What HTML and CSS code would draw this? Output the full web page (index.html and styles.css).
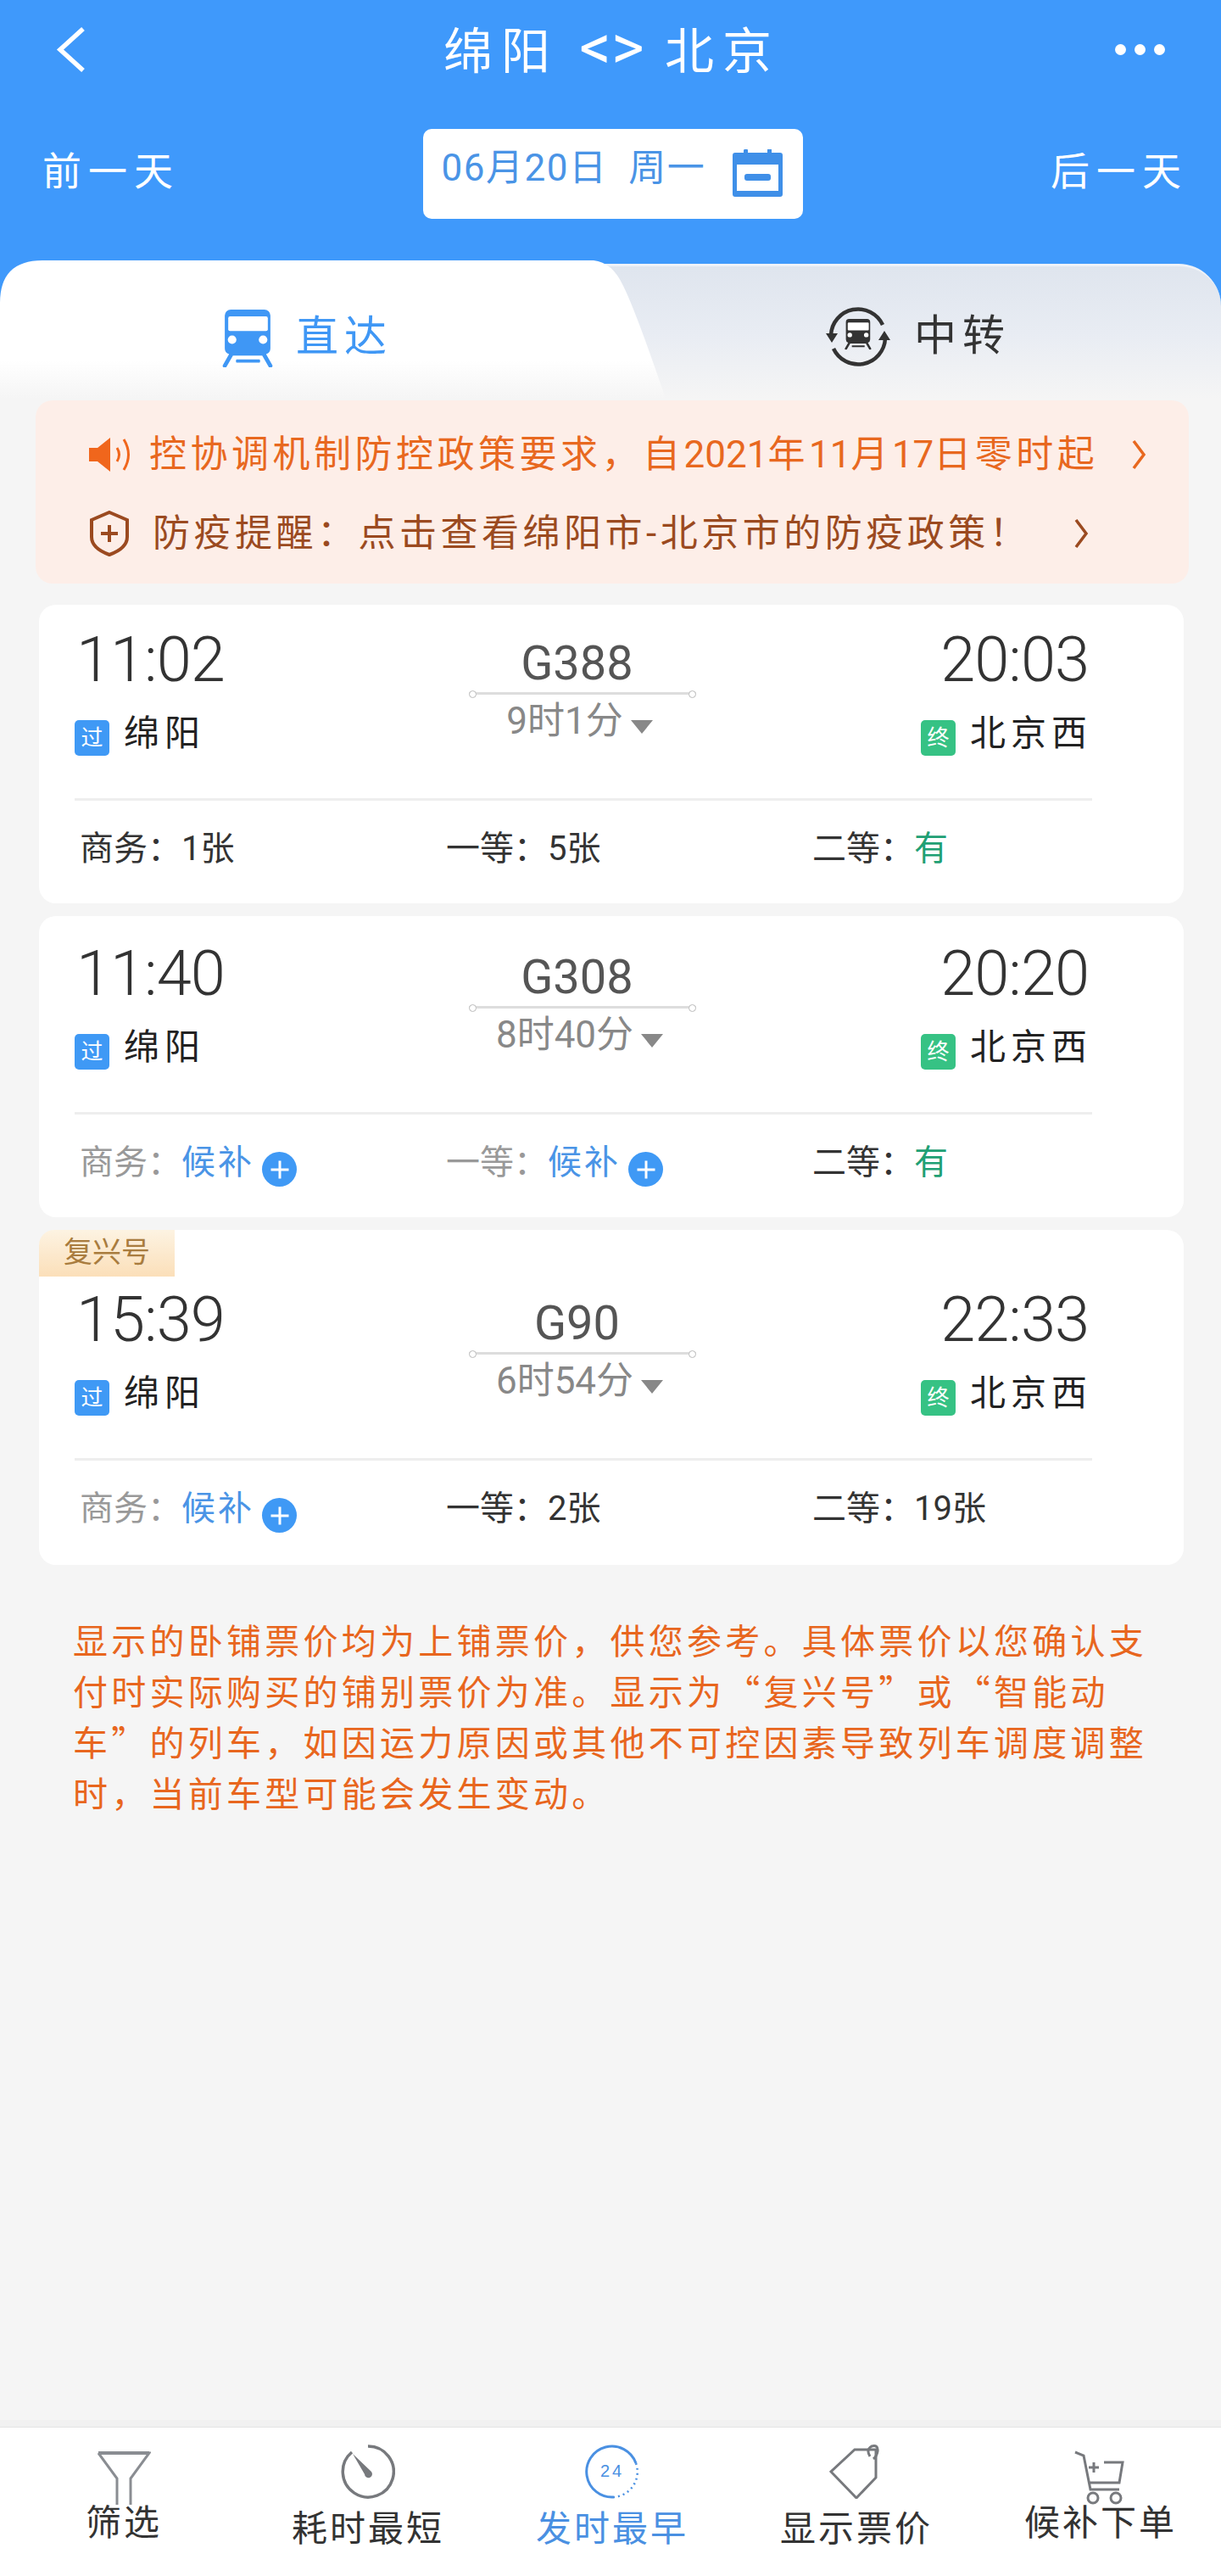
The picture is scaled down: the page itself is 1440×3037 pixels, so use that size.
FILE: index.html
```html
<!DOCTYPE html>
<html lang="zh-CN">
<head>
<meta charset="utf-8">
<title>绵阳 &lt;&gt; 北京</title>
<link rel="stylesheet" href="styles.css">
</head>
<body>
<svg class="defs" width="0" height="0" aria-hidden="true">
  <symbol id="train" viewBox="0 0 59 67">
    <path fill="currentColor" d="M10 0h39a7 7 0 0 1 7 7v38a7 7 0 0 1-5 6.700l7 12.300a2 2 0 0 1-4 2.500l-7.500-13h-34l-7.500 13a2 2 0 0 1-4-2.500l7-12.300a7 7 0 0 1-5-6.700V7a7 7 0 0 1 7-7z"/>
    <rect class="train-window" x="7" y="8" width="46" height="17" rx="2"/>
    <circle class="train-window" cx="11.500" cy="35" r="5"/>
    <circle class="train-window" cx="47.500" cy="35" r="5"/>
    <rect x="16" y="58" width="28" height="3.500" rx="1" fill="currentColor"/>
  </symbol>
  <symbol id="chev" viewBox="0 0 18 36">
    <path d="M3 2l12 16L3 34" fill="none" stroke="currentColor" stroke-width="3.500"/>
  </symbol>
</svg>
<div class="page">
  <header class="top">
    <div class="nav">
      <svg class="back" viewBox="0 0 37 55"><path d="M33 3L6 27.500 33 52" fill="none" stroke="#fff" stroke-width="5.500"/></svg>
      <h1 class="title">绵阳 <span class="title-sym">&lt;&gt;</span> 北京</h1>
      <div class="more"><i></i><i></i><i></i></div>
    </div>
    <div class="dates">
      <span class="day-link">前一天</span>
      <div class="date-box">
        <span class="date-text">06月20日&nbsp;&nbsp;周一</span>
        <svg class="cal" viewBox="0 0 59 56">
          <path fill="#3f8fe8" d="M3 4h10V1a2 2 0 0 1 2-1 2 2 0 0 1 3 1v3h23V1a2.500 2.500 0 0 1 5 0v3h10a3 3 0 0 1 3 3v46a3 3 0 0 1-3 3H3a3 3 0 0 1-3-3V7a3 3 0 0 1 3-3z"/>
          <rect x="5" y="18" width="49" height="31" fill="#fff"/>
          <rect x="14" y="29" width="31" height="8" rx="3" fill="#3f8fe8"/>
        </svg>
      </div>
      <span class="day-link day-next">后一天</span>
    </div>
  </header>

  <section class="tabs">
    <div class="tab tab-direct">
      <svg class="tab-train"><use href="#train"/></svg>
      <span class="tab-label">直达</span>
    </div>
    <div class="tab tab-transfer">
      <svg class="tab-swap" viewBox="0 0 76 72">
        <g fill="none" stroke="#333" stroke-width="4.500">
          <path d="M6 34A32 32 0 0 1 67 22"/>
          <path d="M70 38A32 32 0 0 1 9 50"/>
        </g>
        <path fill="#333" d="M0 32h14l-7 11zM62 40h14l-7-11z"/>
        <g transform="translate(22 15) scale(.54)" color="#333"><use href="#train" width="59" height="67"/></g>
      </svg>
      <span class="tab-label">中转</span>
    </div>
  </section>

  <main class="content">
    <section class="notice">
      <div class="notice-row notice-alert">
        <svg class="speaker" viewBox="0 0 50 42">
          <path fill="#f0661c" d="M0 13h10L25 1v40L10 29H0z"/>
          <path d="M33 13q5 8 0 16M41 3q11 18 0 36" fill="none" stroke="#f0661c" stroke-width="3"/>
        </svg>
        <span class="notice-text">控协调机制防控政策要求，自<span class="num">2021</span>年<span class="num">11</span>月<span class="num">17</span>日零时起</span>
        <svg class="chev"><use href="#chev"/></svg>
      </div>
      <div class="notice-row notice-health">
        <svg class="shield" viewBox="0 0 48 54">
          <path d="M24 2l21 9v20c0 10-10 17-21 21C13 48 3 41 3 31V11z" fill="none" stroke="#9b4a20" stroke-width="4"/>
          <path d="M24 17v20M14 27h20" stroke="#9b4a20" stroke-width="4"/>
        </svg>
        <span class="notice-text">防疫提醒：点击查看绵阳市-北京市的防疫政策！</span>
        <svg class="chev"><use href="#chev"/></svg>
      </div>
    </section>

    <section class="tickets">
      <article class="ticket">
        <div class="route">
          <div class="end">
            <div class="time">11:02</div>
            <div class="station"><span class="tag tag-pass">过</span>绵阳</div>
          </div>
          <div class="mid">
            <div class="train-no">G388</div>
            <div class="track"></div>
            <div class="duration">9时1分<span class="caret"></span></div>
          </div>
          <div class="end end-right">
            <div class="time">20:03</div>
            <div class="station"><span class="tag tag-end">终</span>北京西</div>
          </div>
        </div>
        <div class="seats">
          <div class="seat">商务：1张</div>
          <div class="seat">一等：5张</div>
          <div class="seat">二等：<span class="have">有</span></div>
        </div>
      </article>

      <article class="ticket ticket-wait">
        <div class="route">
          <div class="end">
            <div class="time">11:40</div>
            <div class="station"><span class="tag tag-pass">过</span>绵阳</div>
          </div>
          <div class="mid">
            <div class="train-no">G308</div>
            <div class="track"></div>
            <div class="duration">8时40分<span class="caret"></span></div>
          </div>
          <div class="end end-right">
            <div class="time">20:20</div>
            <div class="station"><span class="tag tag-end">终</span>北京西</div>
          </div>
        </div>
        <div class="seats">
          <div class="seat seat-off">商务：<span class="wait">候补</span><span class="plus"></span></div>
          <div class="seat seat-off">一等：<span class="wait">候补</span><span class="plus"></span></div>
          <div class="seat">二等：<span class="have">有</span></div>
        </div>
      </article>

      <article class="ticket ticket-fx">
        <span class="fx-badge">复兴号</span>
        <div class="route">
          <div class="end">
            <div class="time">15:39</div>
            <div class="station"><span class="tag tag-pass">过</span>绵阳</div>
          </div>
          <div class="mid">
            <div class="train-no">G90</div>
            <div class="track"></div>
            <div class="duration">6时54分<span class="caret"></span></div>
          </div>
          <div class="end end-right">
            <div class="time">22:33</div>
            <div class="station"><span class="tag tag-end">终</span>北京西</div>
          </div>
        </div>
        <div class="seats">
          <div class="seat seat-off">商务：<span class="wait">候补</span><span class="plus"></span></div>
          <div class="seat">一等：2张</div>
          <div class="seat">二等：19张</div>
        </div>
      </article>
    </section>

    <p class="note">显示的卧铺票价均为上铺票价，供您参考。具体票价以您确认支<br>付时实际购买的铺别票价为准。显示为“复兴号”或“智能动<br>车”的列车，如因运力原因或其他不可控因素导致列车调度调整<br>时，当前车型可能会发生变动。</p>
  </main>

  <nav class="bar">
    <div class="bar-item bar-high">
      <svg class="bar-icon" viewBox="0 0 64 64">
        <path d="M2 3h60L40 33v31M2 3l22 30v31" fill="none" stroke="#8a8d92" stroke-width="3"/>
        <path d="M2 3h60" stroke="#8a8d92" stroke-width="4"/>
      </svg>
      <span>筛选</span>
    </div>
    <div class="bar-item">
      <svg class="bar-icon" viewBox="0 0 64 64">
        <path d="M32 2a30 30 0 1 1-19 7" fill="none" stroke="#77797d" stroke-width="3.500"/>
        <path d="M14 11l22 21a4.500 4.500 0 1 1-8 3z" fill="#77797d"/>
      </svg>
      <span>耗时最短</span>
    </div>
    <div class="bar-item bar-active">
      <svg class="bar-icon" viewBox="0 0 64 64">
        <path d="M60 22A30 30 0 1 0 34 62" fill="none" stroke="#4a90e2" stroke-width="3"/>
        <path d="M60 22A30 30 0 0 1 34 62" fill="none" stroke="#4a90e2" stroke-width="2.500" stroke-dasharray="2 4"/>
        <text class="icon-24" x="32" y="38" text-anchor="middle">24</text>
      </svg>
      <span>发时最早</span>
    </div>
    <div class="bar-item">
      <svg class="bar-icon" viewBox="0 0 64 64">
        <path d="M30 6h25v33L32 63 2 32z" fill="none" stroke="#77797d" stroke-width="3"/>
        <path d="M48 14q-5-8 2-12 8-2 7 6-1 6-5 9" fill="none" stroke="#77797d" stroke-width="3"/>
      </svg>
      <span>显示票价</span>
    </div>
    <div class="bar-item bar-high">
      <svg class="bar-icon" viewBox="0 0 64 64">
        <path d="M2 2l10 4 8 40h34M24 14v12M18 20h12M36 14h22l-4 24H18" fill="none" stroke="#77797d" stroke-width="3"/>
        <circle cx="23" cy="56" r="6" fill="none" stroke="#77797d" stroke-width="3"/>
        <circle cx="50" cy="56" r="6" fill="none" stroke="#77797d" stroke-width="3"/>
      </svg>
      <span>候补下单</span>
    </div>
  </nav>
</div>
</body>
</html>
```

FILE: styles.css
```css
* { box-sizing: border-box; }
html, body { margin: 0; padding: 0; }
body {
  font-family: Roboto, "Noto Sans CJK SC", sans-serif;
  background: #f5f5f5;
  color: #333;
}
.defs { position: absolute; }
.train-window { fill: #fff; }

.page {
  width: 1440px;
  height: 3037px;
  display: flex;
  flex-direction: column;
  overflow: hidden;
}

/* header */
.top {
  background: #3f99fb;
  padding: 0 45px 49px 50px;
  color: #fff;
}
.nav {
  height: 116px;
  padding-left: 15px;
  padding-right: 21px;
  display: grid;
  grid-template-columns: 1fr auto 1fr;
  align-items: center;
}
.back { width: 37px; height: 55px; }
.title {
  margin: 0 0 0 4px;
  font-size: 58px;
  font-weight: 400;
  letter-spacing: 10px;
  line-height: 1;
  white-space: pre;
}
.title-sym { font-size: 74px; letter-spacing: 0; line-height: 58px; }
.more { justify-self: end; display: flex; gap: 10px; }
.more i { width: 13px; height: 13px; border-radius: 50%; background: #fff; }
.dates {
  margin-top: 36px;
  display: grid;
  grid-template-columns: 1fr 448px 1fr;
  align-items: center;
}
.day-link { font-size: 46px; letter-spacing: 8px; line-height: 1; margin-top: -6px; }
.day-next { justify-self: end; margin-right: -6px; }
.date-box {
  height: 106px;
  background: #fff;
  border-radius: 10px;
  padding: 0 24px 14px 22px;
  display: flex;
  align-items: center;
  justify-content: space-between;
}
.date-text {
  font-size: 44px;
  letter-spacing: 1.500px;
  color: #4a94e6;
  line-height: 1;
  white-space: nowrap;
}
.cal { width: 59px; height: 56px; margin-top: 12px; }

/* tabs */
.tabs {
  background: #3f99fb;
  height: 163px;
  display: flex;
}
.tab { display: flex; align-items: flex-start; }
.tab-label { font-size: 50px; letter-spacing: 7px; line-height: 56px; margin-top: 4px; }
.tab-direct {
  position: relative;
  z-index: 1;
  width: 790px;
  flex: none;
  padding: 58px 0 0 261px;
  gap: 26px;
  color: #3f97f5;
  background: linear-gradient(#fff 0, #fff 72%, #f5f5f5 100%);
  clip-path: path("M0 50Q0 0 50 0L700 0Q722 2 735 30Q750 60 785 163L0 163Z");
}
.tab-train { width: 62px; height: 68px; }
.tab-transfer {
  flex: 1;
  margin-left: -100px;
  margin-top: 4px;
  padding: 47px 0 0 283px;
  gap: 27px;
  color: #333;
  background: linear-gradient(#dfe5ee 0, #e8ecf3 50%, #f5f5f5 100%);
  border-top: 3px solid #eef2f8;
  border-radius: 0 50px 0 0;
}
.tab-swap { width: 78px; height: 72px; }
.tab-transfer .tab-label { margin-top: 7px; }

/* notice */
.content { flex: 1; padding: 2px 44px 0 46px; }
.notice {
  margin: 0 -6px 0 -4px;
  height: 216px;
  padding: 17px 0 0 63px;
  background: #fdeee8;
  border-radius: 20px;
}
.notice-row { height: 93px; display: flex; align-items: center; }
.notice-text { font-size: 44px; letter-spacing: 4.500px; line-height: 1; white-space: nowrap; }
.num { letter-spacing: 0; }
.notice-alert { color: #e8681f; }
.notice-health { color: #9b4a20; }
.speaker { width: 50px; height: 42px; margin-right: 21px; flex: none; }
.shield { width: 48px; height: 54px; margin-right: 27px; flex: none; }
.chev { width: 18px; height: 36px; flex: none; margin-left: 39px; }
.notice-alert .chev { color: #e8681f; }
.notice-health .chev { margin-left: 51px; }

/* tickets */
.tickets { margin-top: 25px; display: flex; flex-direction: column; gap: 15px; }
.ticket {
  position: relative;
  background: #fff;
  border-radius: 20px;
  padding: 37px 0 39px;
}
.ticket-wait { padding-top: 40px; }
.ticket-fx { padding-top: 78px; padding-bottom: 41px; }
.fx-badge {
  position: absolute;
  left: 0;
  top: 0;
  width: 160px;
  height: 55px;
  border-radius: 18px 0 0 0;
  background: linear-gradient(#fdf3e2, #fbdfb9);
  color: #a97c3e;
  font-size: 34px;
  line-height: 52px;
  text-align: center;
}
.route {
  margin: 0 108px 0 42px;
  height: 191px;
  border-bottom: 3px solid #eee;
  display: grid;
  grid-template-columns: 1fr 265px 1fr;
  box-sizing: content-box;
}
.time {
  font-size: 74px;
  font-weight: 300;
  line-height: 56px;
  letter-spacing: -1px;
  padding-left: 2px;
  color: #333;
}
.end-right { justify-self: end; text-align: right; }
.station {
  margin-top: 33px;
  display: flex;
  align-items: center;
  gap: 17px;
  font-size: 42px;
  letter-spacing: 6px;
  line-height: 50px;
  color: #222;
}
.end-right .time { padding-left: 0; padding-right: 4px; }
.tag {
  flex: none;
  width: 41px;
  height: 42px;
  border-radius: 5px;
  margin-top: 10px;
  color: #fff;
  font-size: 26px;
  letter-spacing: 0;
  line-height: 42px;
  text-align: center;
}
.tag-pass { background: #3f99f5; }
.tag-end { background: #36c284; }
.mid { text-align: center; padding-right: 12px; margin-left: -3px; }
.train-no { margin-top: 7px; font-size: 56px; line-height: 50px; color: #555; }
.track {
  position: relative;
  margin: 9px -12px 0 0;
  height: 3px;
  background: #ddd;
}
.track::before, .track::after {
  content: "";
  position: absolute;
  top: -2px;
  width: 7px;
  height: 7px;
  border: 1px solid #bbb;
  border-radius: 50%;
  background: #fff;
}
.track::before { left: 0; }
.track::after { right: 0; }
.duration {
  margin-top: 9px;
  padding-left: 6px;
  font-size: 44px;
  line-height: 44px;
  color: #888;
  white-space: nowrap;
}
.caret {
  display: inline-block;
  margin-left: 9px;
  border-style: solid;
  border-width: 16px 13px 0;
  border-color: #888 transparent transparent;
}
.seats {
  padding: 32px 0 0 48px;
  display: grid;
  grid-template-columns: repeat(3, 432px);
}
.seat {
  display: flex;
  align-items: flex-start;
  height: 50px;
  font-size: 40px;
  line-height: 50px;
  white-space: nowrap;
  color: #333;
}
.seat-off { color: #999; }
.wait { color: #4a94e6; letter-spacing: 3px; }
.have { color: #1fa074; }
.plus {
  position: relative;
  flex: none;
  width: 41px;
  height: 41px;
  margin: 12px 0 0 9px;
  border-radius: 50%;
  background: #3f99f5;
}
.plus::before, .plus::after {
  content: "";
  position: absolute;
  left: 50%;
  top: 50%;
  background: #fff;
  transform: translate(-50%, -50%);
}
.plus::before { width: 21px; height: 3px; }
.plus::after { width: 3px; height: 21px; }

/* note */
.note {
  margin: 57px 0 0 40px;
  font-family: "Noto Sans CJK SC", sans-serif;
  font-size: 41px;
  line-height: 60px;
  letter-spacing: 4.250px;
  color: #e8661e;
  white-space: nowrap;
}

/* bottom bar */
.bar {
  flex: none;
  height: 176px;
  padding-left: 2px;
  background: #fff;
  border-top: 1px solid #e4e4e4;
  box-shadow: 0 -8px 0 #f1f1f1;
  display: grid;
  grid-template-columns: repeat(5, 288px);
}
.bar-item {
  display: flex;
  flex-direction: column;
  align-items: center;
  padding-top: 20px;
  color: #333;
  font-size: 42px;
  letter-spacing: 3px;
  line-height: 50px;
}
.bar-item span { margin-top: 11px; }
.bar-high { padding-top: 27px; }
.bar-high span { margin-top: -3px; }
.bar-active { color: #4a90e2; }
.bar-icon { width: 64px; height: 64px; flex: none; }
.icon-24 { font-size: 20px; fill: #4a90e2; font-family: "Liberation Sans", sans-serif; }
```
